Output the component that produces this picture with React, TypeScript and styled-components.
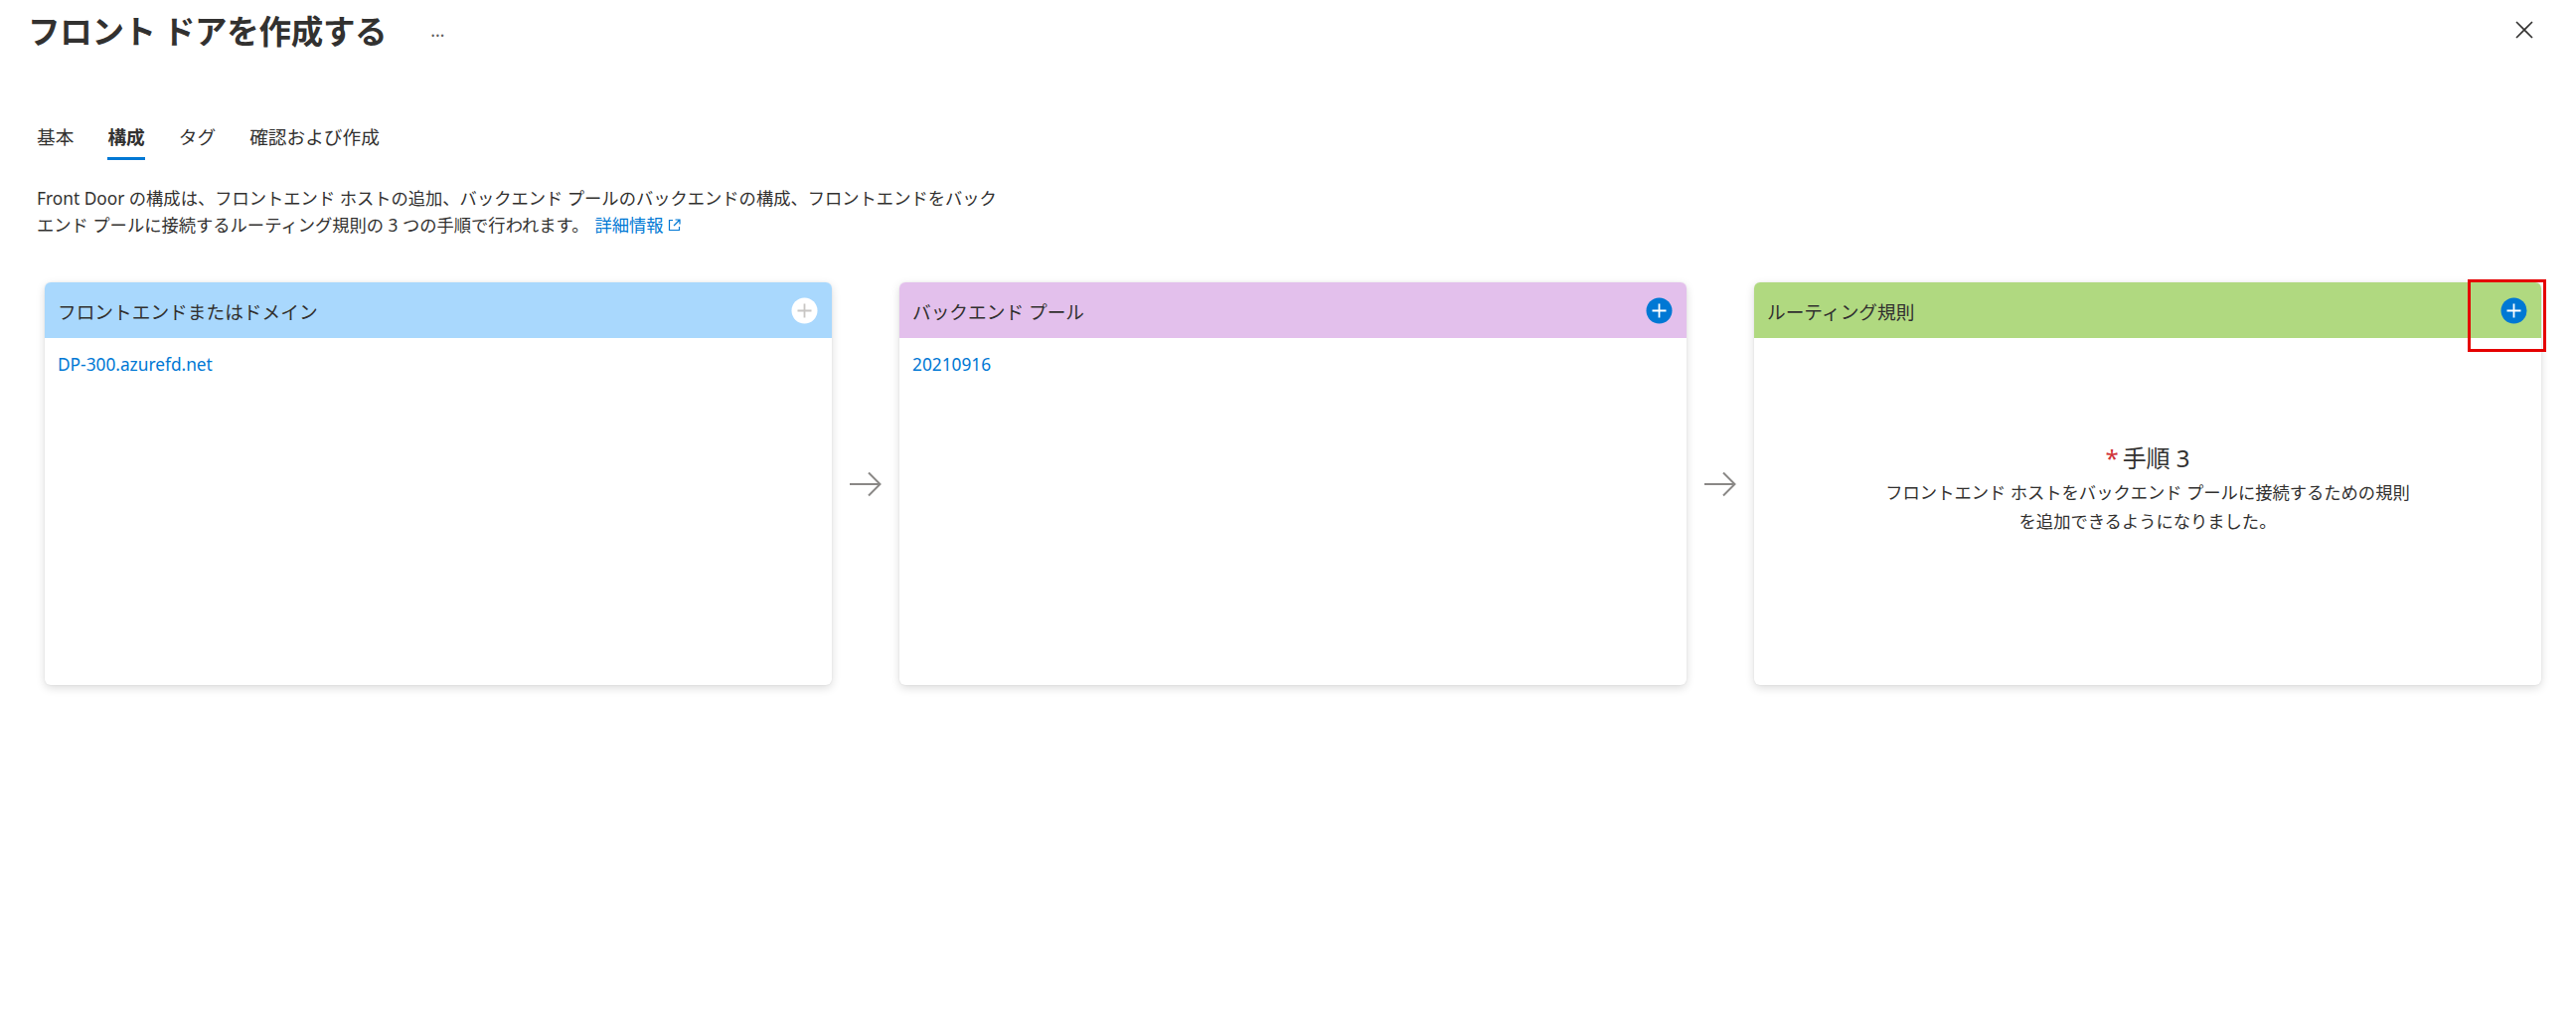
import styled, { createGlobalStyle } from 'styled-components'

const GlobalStyle = createGlobalStyle`
    html, body {
        margin: 0;
        padding: 0;
        background: #ffffff;
    }
    body {
        font-family: "Noto Sans", "Noto Sans CJK JP", sans-serif;
        color: #323130;
    }
`

const Page = styled.div`
    width: 2592px;
    min-height: 1028px;
    box-sizing: border-box;
`

const TitleBar = styled.header`
    display: flex;
    align-items: center;
    padding: 10px 40px 0 28px;
    height: 40px;
`

const Title = styled.h1`
    margin: 0;
    font-size: 32.5px;
    line-height: 40px;
    font-weight: 700;
    font-family: "Noto Sans CJK JP", sans-serif;
    letter-spacing: -0.3px;
    color: #323130;
`

const More = styled.span`
    margin-left: 44px;
    font-size: 18px;
    color: #605e5c;
    line-height: 40px;
`

const CloseButton = styled.button`
    margin-left: auto;
    width: 24px;
    height: 24px;
    padding: 0;
    border: none;
    background: transparent;
    display: flex;
    align-items: center;
    justify-content: center;
`

const Content = styled.div`
    padding-left: 37px;
`

const TabList = styled.nav`
    display: flex;
    gap: 34px;
    margin-top: 60px;
`

const Tab = styled.div<{ $active?: boolean }>`
    font-size: 18.7px;
    line-height: 26px;
    padding: 14px 0 8px;
    border-bottom: 3px solid ${p => (p.$active ? '#0078d4' : 'transparent')};
    font-weight: ${p => (p.$active ? 700 : 400)};
    font-family: "Noto Sans CJK JP", sans-serif;
    color: #323130;
`

const Description = styled.p`
    margin: 25px 0 0;
    font-size: 17.3px;
    line-height: 27px;
    color: #323130;
`

const Link = styled.a`
    margin-left: 6px;
    color: #0078d4;
    text-decoration: none;
    display: inline-flex;
    align-items: center;
    gap: 4px;
`

const Designer = styled.div`
    display: flex;
    margin: 44px 0 0 8px;
    width: 2512px;
`

const Card = styled.section`
    position: relative;
    flex: 0 0 792px;
    height: 405px;
    border-radius: 6px;
    background: #ffffff;
    box-shadow: 0 3px 10px rgba(0, 0, 0, 0.14), 0 0 2px rgba(0, 0, 0, 0.08);
    display: flex;
    flex-direction: column;
`

const CardHeader = styled.div<{ $color: string }>`
    height: 56px;
    flex: 0 0 56px;
    background: ${p => p.$color};
    border-radius: 6px 6px 0 0;
    display: flex;
    align-items: center;
    justify-content: space-between;
    padding: 0 14px 0 13px;
    font-size: 18.7px;
    color: #323130;
`

const CardBody = styled.div`
    flex: 1;
    padding: 17px 13px;
    font-size: 17.3px;
    line-height: 20px;
`

const ItemLink = styled.a`
    color: #0078d4;
    text-decoration: none;
`

const EmptyState = styled.div`
    flex: 1;
    display: flex;
    flex-direction: column;
    align-items: center;
    padding-top: 105px;
    text-align: center;
`

const StepTitle = styled.div`
    font-size: 24px;
    line-height: 32px;
    font-weight: 400;
    color: #323130;
`

const Required = styled.span`
    color: #d13438;
    margin-right: 4px;
`

const StepText = styled.div`
    margin-top: 4px;
    font-size: 17.3px;
    line-height: 29px;
    color: #323130;
`

const ArrowColumn = styled.div`
    flex: 0 0 68px;
    display: flex;
    align-items: center;
    justify-content: center;
`

const Highlight = styled.div`
    position: absolute;
    top: -3px;
    right: -5px;
    width: 79px;
    height: 73px;
    box-sizing: border-box;
    border: 3px solid #e50000;
    pointer-events: none;
`

const PlusIcon = ({ disabled }: { disabled?: boolean }) => (
    <svg width="27" height="27" viewBox="0 0 27 27">
        <circle cx="13.5" cy="13.5" r="13" fill={disabled ? '#ffffff' : '#0078d4'} />
        <path
            d="M13.5 6.5v14M6.5 13.5h14"
            stroke={disabled ? '#c8c6c4' : '#ffffff'}
            strokeWidth="1.8"
        />
    </svg>
)

const Arrow = () => (
    <svg width="36" height="28" viewBox="0 0 36 28">
        <path d="M2 14h31M21 2.5L32.5 14 21 25.5" fill="none" stroke="#8a8886" strokeWidth="2" />
    </svg>
)

const ExternalIcon = () => (
    <svg width="13" height="13" viewBox="0 0 13 13">
        <path d="M5 1.5H1.5v10h10V8" fill="none" stroke="#0078d4" strokeWidth="1.2" />
        <path d="M7.5 1h4.5v4.5M12 1L6 7" fill="none" stroke="#0078d4" strokeWidth="1.2" />
    </svg>
)

const CloseIcon = () => (
    <svg width="18" height="18" viewBox="0 0 18 18">
        <path d="M1 1l16 16M17 1L1 17" stroke="#323130" strokeWidth="1.6" />
    </svg>
)

export default function App() {
    return (
        <Page>
            <GlobalStyle />
            <TitleBar>
                <Title>フロント ドアを作成する</Title>
                <More>…</More>
                <CloseButton aria-label="close">
                    <CloseIcon />
                </CloseButton>
            </TitleBar>
            <Content>
                <TabList>
                    <Tab>基本</Tab>
                    <Tab $active>構成</Tab>
                    <Tab>タグ</Tab>
                    <Tab>確認および作成</Tab>
                </TabList>
                <Description>
                    Front Door の構成は、フロントエンド ホストの追加、バックエンド プールのバックエンドの構成、フロントエンドをバック
                    <br />
                    エンド プールに接続するルーティング規則の 3 つの手順で行われます。
                    <Link href="#">
                        詳細情報
                        <ExternalIcon />
                    </Link>
                </Description>
                <Designer>
                    <Card>
                        <CardHeader $color="#a9d8fd">
                            <span>フロントエンドまたはドメイン</span>
                            <PlusIcon disabled />
                        </CardHeader>
                        <CardBody>
                            <ItemLink href="#">DP-300.azurefd.net</ItemLink>
                        </CardBody>
                    </Card>
                    <ArrowColumn>
                        <Arrow />
                    </ArrowColumn>
                    <Card>
                        <CardHeader $color="#e3c0ec">
                            <span>バックエンド プール</span>
                            <PlusIcon />
                        </CardHeader>
                        <CardBody>
                            <ItemLink href="#">20210916</ItemLink>
                        </CardBody>
                    </Card>
                    <ArrowColumn>
                        <Arrow />
                    </ArrowColumn>
                    <Card>
                        <CardHeader $color="#b0d980">
                            <span>ルーティング規則</span>
                            <PlusIcon />
                        </CardHeader>
                        <EmptyState>
                            <StepTitle>
                                <Required>*</Required>手順 3
                            </StepTitle>
                            <StepText>
                                フロントエンド ホストをバックエンド プールに接続するための規則
                                <br />
                                を追加できるようになりました。
                            </StepText>
                        </EmptyState>
                        <Highlight />
                    </Card>
                </Designer>
            </Content>
        </Page>
    )
}
